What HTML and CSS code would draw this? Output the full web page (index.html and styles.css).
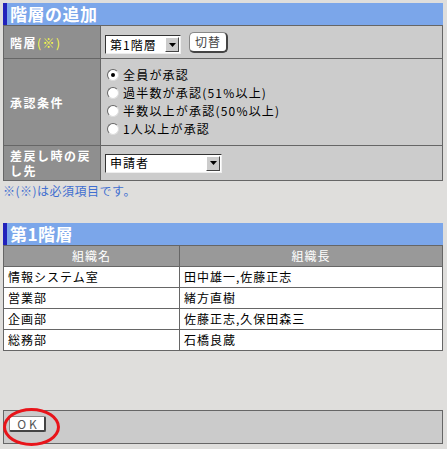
FILE: index.html
```html
<!DOCTYPE html>
<html lang="ja">
<head>
    <meta charset="UTF-8">
    <title>階層の追加</title>
    <link rel="stylesheet" href="styles.css">
</head>
<body>
    <div class="page">
        <h2 class="title">階層の追加</h2>
        <table class="form">
            <tr class="row-level">
                <th>階層<span class="req">(※)</span></th>
                <td>
                    <div class="inline">
                        <div class="select sel-level">
                            <span>第1階層</span>
                            <span class="arrow"><svg width="7" height="4" viewBox="0 0 7 4"><path d="M0 0h7L3.5 4z" fill="#000"/></svg></span>
                        </div>
                        <button class="btn btn-switch">切替</button>
                    </div>
                </td>
            </tr>
            <tr class="row-approve">
                <th>承認条件</th>
                <td>
                    <label class="radio"><input type="radio" name="cond" checked>全員が承認</label>
                    <label class="radio"><input type="radio" name="cond">過半数が承認(51%以上)</label>
                    <label class="radio"><input type="radio" name="cond">半数以上が承認(50%以上)</label>
                    <label class="radio"><input type="radio" name="cond">1人以上が承認</label>
                </td>
            </tr>
            <tr class="row-back">
                <th>差戻し時の戻し先</th>
                <td>
                    <div class="select sel-back">
                        <span>申請者</span>
                        <span class="arrow"><svg width="7" height="4" viewBox="0 0 7 4"><path d="M0 0h7L3.5 4z" fill="#000"/></svg></span>
                    </div>
                </td>
            </tr>
        </table>
        <p class="note">※(※)は必須項目です。</p>

        <h2 class="title title-2">第1階層</h2>
        <table class="list">
            <tr>
                <th class="col-org">組織名</th>
                <th>組織長</th>
            </tr>
            <tr><td>情報システム室</td><td>田中雄一,佐藤正志</td></tr>
            <tr><td>営業部</td><td>緒方直樹</td></tr>
            <tr><td>企画部</td><td>佐藤正志,久保田森三</td></tr>
            <tr><td>総務部</td><td>石橋良蔵</td></tr>
        </table>

        <div class="footer">
            <button class="btn btn-ok">OK</button>
        </div>
    </div>
</body>
</html>
```

FILE: styles.css
```css
* {
    margin: 0;
    padding: 0;
    box-sizing: border-box;
}

body {
    font-family: "Noto Sans CJK JP", "DejaVu Sans", sans-serif;
    font-size: 12px;
    line-height: 16px;
    background-color: #dfdedc;
    color: #000;
    padding: 3px;
}

.page {
    width: 440px;
}

.title {
    height: 22px;
    padding-left: 3px;
    background: #7ba6ea;
    border-left: 4px solid #2222bb;
    color: white;
    font-size: 17px;
    font-weight: bold;
    line-height: 22px;
    letter-spacing: 0.5px;
}

.title-2 {
    margin-top: 24px;
}

table {
    width: 100%;
    border-collapse: collapse;
}

.form th,
.form td {
    border: 1px solid #666;
}

.form th {
    width: 97px;
    background: #8f8f8f;
    color: white;
    font-weight: bold;
    text-align: left;
    padding: 0 2px 0 6px;
    line-height: 15px;
    letter-spacing: 1.5px;
}

.form td {
    background: #cccccc;
    padding: 0 4px;
}

.req {
    color: #ffff44;
    font-weight: normal;
}

.row-level {
    height: 33px;
}

.row-approve {
    height: 87px;
}

.row-back {
    height: 35px;
}

.inline {
    display: flex;
    align-items: center;
    gap: 8px;
}

.select {
    display: flex;
    align-items: center;
    justify-content: space-between;
    height: 19px;
    background: white;
    border: 1px solid #333;
    border-right-color: #eee;
    border-bottom-color: #eee;
    padding-left: 4px;
    letter-spacing: 1px;
}

.sel-level {
    width: 76px;
    margin-top: 5px;
}

.sel-back {
    width: 117px;
}

.arrow {
    display: flex;
    align-items: center;
    justify-content: center;
    width: 14px;
    height: 15px;
    margin-right: 1px;
    background: #cccccc;
    border: 1px solid #fff;
    border-right-color: #444;
    border-bottom-color: #444;
}

.btn {
    font-family: inherit;
    font-size: 12px;
    background: white;
    color: #444;
    border: 1px solid #888;
    border-right: 2px solid #444;
    border-bottom: 2px solid #444;
    cursor: pointer;
}

.btn-switch {
    width: 39px;
    height: 21px;
    border-radius: 5px;
    letter-spacing: 1px;
}

.radio {
    display: flex;
    align-items: center;
    gap: 4px;
    height: 18px;
    padding-left: 2px;
    letter-spacing: 1.2px;
}

.radio input {
    appearance: none;
    width: 12px;
    height: 12px;
    border-radius: 50%;
    background: white;
    border: 1px solid #666;
    border-right-color: #ddd;
    border-bottom-color: #ddd;
    display: flex;
    align-items: center;
    justify-content: center;
}

.radio input:checked::after {
    content: "";
    width: 4px;
    height: 4px;
    border-radius: 50%;
    background: #000;
}

.note {
    color: #3f6fd0;
    margin-top: 2px;
    height: 16px;
    letter-spacing: 0.5px;
}

.list th,
.list td {
    border: 1px solid #666;
    height: 21px;
    padding: 0 4px;
    line-height: 16px;
    letter-spacing: 1px;
}

.list th {
    background: #999;
    color: white;
    font-weight: normal;
}

.list td {
    background: white;
}

.col-org {
    width: 176px;
}

.footer {
    margin-top: 59px;
    height: 34px;
    border: 1px solid #666;
    background: #cbcbcb;
    display: flex;
    align-items: flex-start;
    padding: 5px 0 0 5px;
}

.btn-ok {
    position: relative;
    width: 37px;
    height: 16px;
    padding: 0;
    line-height: 13px;
    letter-spacing: 3px;
    text-indent: 3px;
    color: #555;
    border-radius: 2px;
}

.btn-ok::after {
    content: "";
    position: absolute;
    left: -7px;
    top: -9px;
    width: 51px;
    height: 32px;
    border: 3px solid #e8141a;
    border-radius: 50%;
}
```
